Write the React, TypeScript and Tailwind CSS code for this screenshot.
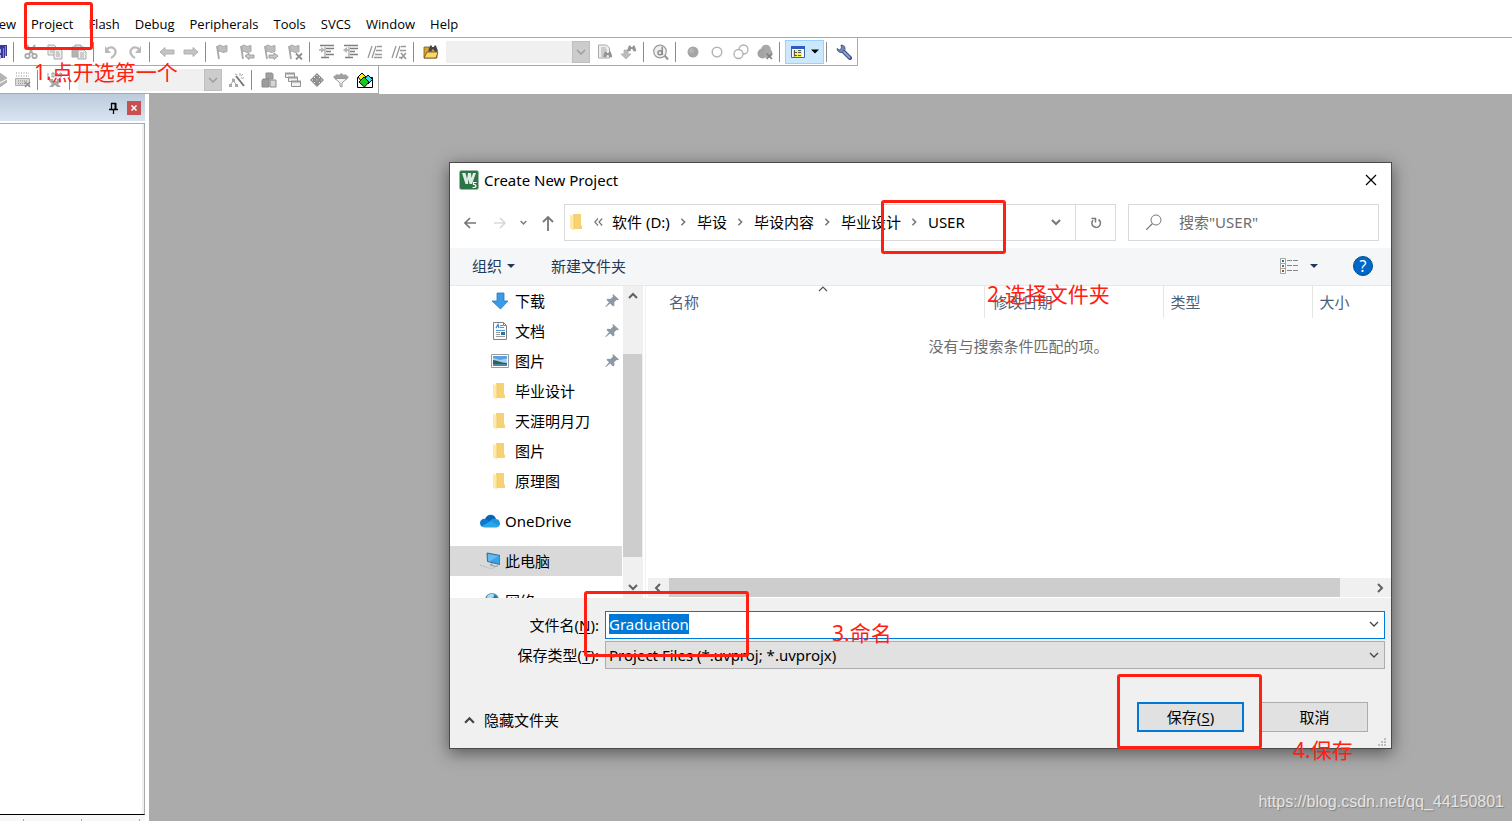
import { useEffect, useRef } from "react";
import type { ReactNode } from "react";

function Svg({ children, size = 16 }: { children: ReactNode; size?: number }) {
  return (
    <svg viewBox={`0 0 ${size} ${size}`} width={size} height={size} className="shrink-0" aria-hidden="true">
      {children}
    </svg>
  );
}

function Tool({ label, children }: { label: string; children: ReactNode }) {
  return (
    <button aria-label={label} className="flex h-6 w-6 shrink-0 items-center justify-center">
      <Svg>{children}</Svg>
    </button>
  );
}

function Cut({ label, children }: { label: string; children: ReactNode }) {
  return (
    <button aria-label={label} className="flex h-6 w-[11px] shrink-0 items-center justify-end overflow-hidden pr-1">
      <Svg>{children}</Svg>
    </button>
  );
}

function Sep() {
  return <span className="mr-[5px] ml-0.5 h-5 w-px shrink-0 bg-[#8c8c8c]" />;
}

function ToolCombo({ label }: { label: string }) {
  return (
    <div className="mx-[3px] flex h-[22px] w-36 shrink-0 bg-[#f0f0f0]">
      <input aria-label={label} disabled className="min-w-0 flex-1 bg-transparent" />
      <button aria-label={`${label} list`} className="flex w-[18px] items-center justify-center border border-[#bfbfbf] bg-[#cccccc]">
        <svg viewBox="0 0 10 6" width="10" height="6"><path d="M1 1l4 4 4-4" fill="none" stroke="#9a9a9a" strokeWidth="1.3" /></svg>
      </button>
    </div>
  );
}

const G = "#a9a9a9";

function Flag({ children }: { children?: ReactNode }) {
  return (
    <>
      <path d="M2 2.500l3-1.500 3 1.500 4-1v6l-4 1-3-1.500-2 1z" fill="#bdbdbd" stroke={G} />
      <path d="M2 2l2 13" stroke={G} strokeWidth="1.800" />
      {children}
    </>
  );
}

function Binoculars() {
  return <path d="M2 8l2-6h2l1 2h2l1-2h2l2 6v2h-4l-1-3h-2l-1 3H2z" />;
}

function Toolbars() {
  return (
    <div className="border-t border-[#a9a9a9]">
      <div role="toolbar" aria-label="File toolbar" className="flex h-7 w-[858px] items-center border-r border-b border-[#a9a9a9]">
        <Cut label="Save all">
          <path d="M4 1h12v11h-2v2H1V4h3z" fill="#3a3a9c" /><path d="M2 5h8v4H2zM3 11h7v4H3z" fill="#b4b5ec" /><path d="M12.500 4v10M14.500 2v10" stroke="#8686d0" />
        </Cut>
        <Sep />
        <Tool label="Cut">
          <path d="M4 1l6 9M12 1L6 10" stroke={G} strokeWidth="2" /><circle cx="4.500" cy="12" r="2.200" fill="none" stroke={G} strokeWidth="1.800" /><circle cx="11.500" cy="12" r="2.200" fill="none" stroke={G} strokeWidth="1.800" />
        </Tool>
        <Tool label="Copy">
          <path d="M1 1h6l2 2v8H1z" fill="#ececec" stroke={G} /><path d="M7 5h6l2 2v8H7z" fill="#ececec" stroke={G} /><path d="M3 4h3M3 6h4M3 8h3M9 8h3M9 10h4M9 12h4" stroke={G} />
        </Tool>
        <Tool label="Paste">
          <path d="M1 3h12v10H1z" fill="#b3b3b3" stroke={G} /><path d="M4 1h6v3H4z" fill="#dedede" stroke={G} /><path d="M7 6h6l2 2v7H7z" fill="#f0f0f0" stroke={G} /><path d="M9 9h4M9 11h4M9 13h4" stroke={G} />
        </Tool>
        <Sep />
        <Tool label="Undo"><path d="M4 5c6-4 10 1 8 5-1 2-2 3-4 4" fill="none" stroke="#b9b9b9" strokeWidth="2.200" /><path d="M2 2v7h6z" fill="#b9b9b9" /></Tool>
        <Tool label="Redo"><path d="M12 5C6 1 2 6 4 10c1 2 2 3 4 4" fill="none" stroke="#b9b9b9" strokeWidth="2.200" /><path d="M14 2v7H8z" fill="#b9b9b9" /></Tool>
        <Sep />
        <Tool label="Back"><path d="M1 8l5-4.500V6h9v4H6v2.500z" fill="#c4c4c4" stroke="#b0b0b0" /></Tool>
        <Tool label="Forward"><path d="M15 8l-5-4.500V6H1v4h9v2.500z" fill="#c4c4c4" stroke="#b0b0b0" /></Tool>
        <Sep />
        <Tool label="Toggle bookmark"><Flag /></Tool>
        <Tool label="Previous bookmark"><Flag><path d="M6 12l4-3v2h5v3h-5v1.500z" fill="#c8c8c8" stroke="#8f8f8f" strokeWidth=".8" /></Flag></Tool>
        <Tool label="Next bookmark"><Flag><path d="M15 12l-4-3v2H6v3h5v1.500z" fill="#c8c8c8" stroke="#8f8f8f" strokeWidth=".8" /></Flag></Tool>
        <Tool label="Clear bookmarks"><Flag><path d="M9 9.500l6 6M15 9.500l-6 6" stroke="#8f8f8f" strokeWidth="1.800" /></Flag></Tool>
        <Sep />
        <Tool label="Indent">
          <path d="M1 1.500h14M7 4.500h8M7 7.500h5M7 10.500h8M2 13.500h8" stroke="#808080" strokeWidth="1.300" /><path d="M0 6h5M6 3v10" stroke={G} strokeWidth="1.300" /><path d="M2 3l4 3-4 3z" fill="#b5b5b5" />
        </Tool>
        <Tool label="Unindent">
          <path d="M1 1.500h14M7 4.500h8M7 7.500h5M7 10.500h8M2 13.500h8" stroke="#808080" strokeWidth="1.300" /><path d="M1 6h5M6 3v10" stroke={G} strokeWidth="1.300" /><path d="M4 3L0 6l4 3z" fill="#b5b5b5" />
        </Tool>
        <Tool label="Comment"><path d="M1 14L5 2M5 14L9 2M10 2.500h5M9 6.500h6M8 10.500h7M7 13.500h8" stroke="#999" strokeWidth="1.300" /></Tool>
        <Tool label="Uncomment"><path d="M1 14L5 2M5 14L9 2M10 2.500h5M9 6.500h6M8 13.500h3" stroke="#999" strokeWidth="1.300" /><path d="M10 9l5 6M15 9l-5 6" stroke="#999" strokeWidth="1.600" /></Tool>
        <Sep />
        <Tool label="Find in files">
          <path d="M1 3h5l1 2h7v9H1z" fill="#d9a42c" stroke="#7b5a1a" strokeWidth=".8" /><path d="M1 14l3-6h11l-2 6z" fill="#f9d768" stroke="#6b4c10" strokeWidth=".8" /><g transform="translate(4 0) scale(.75)" fill="#45454f"><Binoculars /></g>
        </Tool>
        <ToolCombo label="Find text" />
        <Tool label="Find">
          <path d="M1.500 1h8l3 3v10h-11z" fill="#eee" stroke={G} /><path d="M4 4h5M4 6h6M4 8h5M4 10h4M4 12h3" stroke={G} /><g transform="translate(5 6) scale(.72)" fill="#939393"><Binoculars /></g>
        </Tool>
        <Tool label="Incremental find">
          <path d="M3 6h4v4h3l-5 5-5-5h3z" fill="#bcbcbc" stroke={G} strokeWidth=".7" /><g transform="translate(5 0) scale(.72)" fill="#959595"><Binoculars /></g>
        </Tool>
        <Sep />
        <Tool label="Debug session">
          <circle cx="7" cy="7.500" r="6.300" fill="#efefef" stroke="#999" strokeWidth="1.200" /><path d="M11.500 11.500l3.500 4" stroke="#999" strokeWidth="2.200" /><path d="M9.200 3v8" stroke="#8c8c8c" strokeWidth="1.500" /><circle cx="7" cy="8.800" r="2" fill="none" stroke="#8c8c8c" strokeWidth="1.400" />
        </Tool>
        <Sep />
        <Tool label="Insert breakpoint"><circle cx="8" cy="8" r="5.500" fill="#a5a5a5" /><circle cx="6.500" cy="6.500" r="2.500" fill="#b4b4b4" /></Tool>
        <Tool label="Disable breakpoint"><circle cx="8" cy="8" r="4.800" fill="#fff" stroke="#b5b5b5" strokeWidth="1.500" /></Tool>
        <Tool label="Disable all breakpoints"><circle cx="10.500" cy="5.500" r="4.500" fill="#fff" stroke="#b0b0b0" strokeWidth="1.300" /><circle cx="5.500" cy="10" r="4.500" fill="#fff" stroke="#b0b0b0" strokeWidth="1.300" /></Tool>
        <Tool label="Kill all breakpoints"><circle cx="9" cy="5.500" r="4.800" fill="#a9a9a9" /><circle cx="5.500" cy="9.500" r="5" fill="#a3a3a3" /><circle cx="11" cy="9.500" r="4.500" fill="#a9a9a9" /><path d="M9.500 9.500l5.500 5.500M15 9.500L9.500 15" stroke="#828282" strokeWidth="1.700" /></Tool>
        <Sep />
        <button aria-label="Project window" className="flex h-6 w-[39px] shrink-0 items-center justify-between border border-[#99d1ff] bg-[#cce8ff] pr-1 pl-1">
          <Svg>
            <path d="M1.500 2.500h13v11h-13z" fill="#fff" stroke="#3b63a8" /><path d="M1 2h14v3H1z" fill="#2b5cc4" /><path d="M3 6h9v7H3z" fill="#f4f453" /><path d="M4.500 6v6.500M5 8.500h2M5 11.500h2M8 6.500h3M8 8.500h3M8 11.500h3" stroke="#555" />
          </Svg>
          <svg viewBox="0 0 8 5" width="8" height="5"><path d="M0 .5h8L4 4.500z" fill="#000" /></svg>
        </button>
        <Sep />
        <Tool label="Configuration">
          <path d="M7 7l7 7" stroke="#3c5080" strokeWidth="4" strokeLinecap="round" /><path d="M7 7l6.500 6.500" stroke="#8ba2cc" strokeWidth="1.800" strokeLinecap="round" /><path d="M5 1c3 0 4.500 2 4 4.500L6 8.500C3 9 1 7 1 4.500l2.500 1.500 2-2z" fill="#6f86b2" stroke="#3c5080" strokeWidth=".8" />
        </Tool>
      </div>
      <div role="toolbar" aria-label="Build toolbar" className="flex h-7 w-[379px] items-center border-r border-b border-[#a9a9a9]">
        <Cut label="Build"><path d="M2 4l7-3 7 5-7 4zM2 8l7 4 7-4v2l-7 5-7-4z" fill="#b4b4b4" stroke={G} strokeWidth=".7" /></Cut>
        <Tool label="Batch build">
          <path d="M1 1h13M1 4h13" stroke="#b5b5b5" strokeDasharray="1 1.500" strokeWidth="1.400" /><path d="M.5 6.500h14v7H.500z" fill="#dadada" stroke="#b0b0b0" /><path d="M3 9h9M3 11.500h7" stroke="#8f8f8f" strokeDasharray="1 1" /><path d="M10 10l5 5M15 10l-5 5" stroke="#8d8d8d" strokeWidth="1.500" />
        </Tool>
        <Sep />
        <Tool label="Download">
          <path d="M1 1v4h2M5 1h2v4H5zM9 5V2l1-1 1 1v3M13 1h1l1 1v2l-1 1h-1z" fill="none" stroke="#999" /><path d="M2 7h4v2h4V7h4v2l-3 3 3 3h-4l-2-2-2 2H2l3-3-3-3z" fill="#a8a8a8" />
        </Tool>
        <Sep />
        <ToolCombo label="Target" />
        <Tool label="Target options">
          <path d="M7 4l8 10" stroke="#777" strokeWidth="2" /><path d="M11 1v3M14 2l-2 2M12 6h3M6 2l2 1" stroke={G} /><path d="M4 6v3M2 12l2-3 3 3" stroke={G} fill="none" /><path d="M0 12h3v3H0zM6 12h3v3H6zM3 7h3v3H3z" fill={G} />
        </Tool>
        <Sep />
        <Tool label="File extensions"><path d="M5 1h6l1 1.500V7H5z" fill="#9f9f9f" stroke="#8d8d8d" /><path d="M1 8.500L2 7h6v8H1z" fill="#9c9c9c" stroke="#8a8a8a" /><path d="M9 8h6v7H9z" fill="#d5d5d5" stroke="#8a8a8a" /></Tool>
        <Tool label="Multi-project"><g fill="#f2f2f2" stroke="#8f8f8f"><path d="M.5 1.500h9v4h-9z" /><path d="M3.500 5.500h9v4h-9z" /><path d="M6.500 9.500h9v5h-9z" /></g><path d="M0 1.500h10M3 5.500h10M6 9.500h10" stroke="#999" strokeWidth="1.800" /></Tool>
        <Tool label="Run-time environment"><path d="M8 1l7 7-7 7-7-7z" fill="#8e8e8e" /><path d="M5 5h1v1H5zM10 5h1v1h-1zM7.500 3h1v1h-1zM7.500 7.500h1v1h-1zM5 10h1v1H5zM10 10h1v1h-1zM3 7.500h1v1H3zM12 7.500h1v1h-1z" fill="#f3f3f3" /></Tool>
        <Tool label="Select packs"><path d="M0 5l4-3 2 1 2-2 3 2 1-1 4 3-3 3H3z" fill="#a0a0a0" /><path d="M2 6.500h12l-5 4.500v4l-2-1v-3z" fill="#f2f2f2" stroke="#999" /></Tool>
        <Tool label="Pack installer">
          <path d="M.5 5.500h15v10H.500z" fill="#fff" stroke="#000" /><path d="M5 1l4 4-4 5-4-5z" fill="#f5ef19" stroke="#000" /><path d="M11 3l4.500 4.500L11 12 7 7.500z" fill="#35dcf0" stroke="#000" /><path d="M7 5l5 5-4.500 5L2 10z" fill="#10d010" stroke="#000" />
        </Tool>
      </div>
    </div>
  );
}

function Folder() {
  return (
    <Svg size={18}>
      <path d="M5 1h8v11.500h1V16H5z" fill="#f6d273" /><path d="M2 1.500l4 2v14l-4-2z" fill="#fde9a9" /><path d="M6 3.500V16" stroke="#eec35a" fill="none" strokeWidth=".6" />
    </Svg>
  );
}

function Chevron({ dir, className, size = 10, stroke = 2 }: { dir: "up" | "down" | "left" | "right"; className: string; size?: number; stroke?: number }) {
  const d = { up: "M1 7l4-4 4 4", down: "M1 3l4 4 4-4", left: "M7 1L3 5l4 4", right: "M3 1l4 4-4 4" }[dir];
  return (
    <svg viewBox="0 0 10 10" width={size} height={size} className={className} aria-hidden="true">
      <path d={d} fill="none" stroke="currentColor" strokeWidth={stroke} />
    </svg>
  );
}

const downloadIcon = <Svg size={18}><path d="M6 1h7v8h4l-7.500 8L1 9h5z" fill="#3c9be8" stroke="#2478bd" strokeWidth=".8" /></Svg>;
const documentIcon = (
  <Svg size={18}>
    <path d="M2.500.500h10l3 3v14h-13z" fill="#fbfbfb" stroke="#7d8286" /><path d="M12.500.500v3h3" fill="none" stroke="#7d8286" /><path d="M5 6l2-3.500L8 6" fill="none" stroke="#2e86cc" strokeWidth="1.200" /><path d="M9 3.500h3M9 5.500h4M5 8.500h9" stroke="#4d9ad6" /><path d="M5 10.500h4M5 12.500h4M5 14.500h9" stroke="#9a9fa3" /><path d="M10 10h4v3h-4z" fill="#2f7399" />
  </Svg>
);
const pictureIcon = (
  <Svg size={18}>
    <path d="M.5 2.500h17v13H.500z" fill="#fff" stroke="#9a9a9a" /><path d="M2 4h14v10H2z" fill="#a9d3f3" /><path d="M2 4h14v2.500L9 8 2 6z" fill="#5b9fe4" /><path d="M2 8c4 0 8 3 14 3v1H2z" fill="#35614e" /><path d="M2 12h14v2H2z" fill="#4a84ac" />
  </Svg>
);
const oneDriveIcon = (
  <svg viewBox="0 0 20 14" width="20" height="14" className="shrink-0">
    <path d="M5 5c2-5 9-6 11 0l-7 4z" fill="#0864b8" /><path d="M0 9c0-3 3-5 6-4l8 5-10 3C2 13 0 12 0 9z" fill="#1178d0" /><path d="M9 8c2-3 5-4 7-3 3 0 4 3 4 5 0 2-2 3-4 3z" fill="#1f94e2" /><path d="M2 12l9-5 8 5c-1 1-2 1.500-3 1.500H5c-1 0-2-.5-3-1.500z" fill="#28a8ea" />
  </svg>
);
const computerIcon = (
  <svg viewBox="0 0 20 18" width="20" height="18" className="shrink-0">
    <path d="M7 1l13 2.500v9L7.500 9.500z" fill="#37a5ee" stroke="#4c6475" /><path d="M8 2l10.500 2-9 5.500L8 9z" fill="#5fbcf7" /><path d="M13 11.500l-3 1.500 6 1.500 2-1" fill="none" stroke="#8f9ba3" /><path d="M0 13l11 3.500 4-1" fill="none" stroke="#b1bac0" strokeDasharray="2 1" /><path d="M1 14l9 3" stroke="#c9d0d4" />
  </svg>
);
const networkIcon = (
  <svg viewBox="0 0 20 18" width="20" height="18" className="shrink-0">
    <circle cx="12" cy="8" r="7" fill="#4397c6" /><path d="M7 5c2-4 6-4 7-2s-2 1-2 4-4 2-5-2z" fill="#a9dbe9" /><path d="M14 3c3 1 4 4 4 6l-3-1z" fill="#2b6a92" /><path d="M1 6l5 1v6l-5-1z" fill="#7a99aa" />
  </svg>
);

function Pin() {
  return (
    <Svg size={14}>
      <path d="M8 0l6 5.500-1.500.8-1-.3-2.300 2.300.3 3-1.500 1.200-2.800-3L1 13l-.8-.3L4 8.200 1.500 6l1-1.200 3 .2L8 2.500 7.500 1z" fill="#8b99a6" />
    </Svg>
  );
}

function TreeItem({ icon, text, pinned, root, selected }: { icon: ReactNode; text: string; pinned?: boolean; root?: boolean; selected?: boolean }) {
  return (
    <li className={root ? "mt-2.5" : ""}>
      <button className={`flex h-[30px] w-full items-center pr-[3px] text-left ${root ? "gap-[5px] pl-[30px]" : "gap-[6px] pl-[41px]"} ${selected ? "bg-[#d9d9d9]" : ""}`}>
        {icon}
        <span className="flex-1">{text}</span>
        {pinned && <Pin />}
      </button>
    </li>
  );
}

function Dialog() {
  const nameRef = useRef<HTMLInputElement>(null);
  useEffect(() => {
    nameRef.current?.focus({ preventScroll: true });
    nameRef.current?.select();
  }, []);
  const crumbs = ["软件 (D:)", "毕设", "毕设内容", "毕业设计", "USER"];
  return (
    <section role="dialog" aria-label="Create New Project" className="absolute top-[68px] left-[300px] w-[943px] border border-[#4a4a4a] bg-white font-['Noto_Sans','Noto_Sans_CJK_SC',sans-serif] text-[15px] leading-5 text-black shadow-[0_4px_16px_rgba(0,0,0,0.5)]">
      <header className="flex h-[35px] items-center pr-[14px] pb-0.5 pl-[9px]">
        <Svg size={20}>
          <rect x=".5" y=".5" width="19" height="19" rx="2" fill="#2b7445" stroke="#9db8a6" /><path d="M3 3h3.500l1.500 6 1-6h3l.5 5L14 3h3l-4 11h-2.500L9.500 9 9 14H6.500z" fill="#e0ebe4" /><path d="M17.500 12.500h-3v2c3-.5 3.500 3 .2 3h-1.200" fill="none" stroke="#fff" strokeWidth="1.200" />
        </Svg>
        <h1 className="ml-[5px] flex-1">Create New Project</h1>
        <button aria-label="Close"><svg viewBox="0 0 12 12" width="12" height="12"><path d="M1 1l10 10M11 1L1 11" stroke="#000" strokeWidth="1.200" /></svg></button>
      </header>
      <nav aria-label="Address" className="flex items-center pt-1.5 pr-3 pb-[7px] pl-2">
        <button aria-label="Back" className="flex w-6 justify-center"><svg viewBox="0 0 12 12" width="12" height="12"><path d="M12 6H1M6 1L1 6l5 5" fill="none" stroke="#777" strokeWidth="1.700" /></svg></button>
        <button aria-label="Forward" className="ml-1.5 flex w-6 justify-center"><svg viewBox="0 0 12 12" width="12" height="12"><path d="M0 6h11M6 1l5 5-5 5" fill="none" stroke="#d9d9d9" strokeWidth="1.700" /></svg></button>
        <button aria-label="Recent" className="ml-[3px] flex w-4 justify-center"><Chevron dir="down" size={7} className="text-[#777]" /></button>
        <button aria-label="Up" className="ml-[5px] flex w-6 justify-center"><svg viewBox="0 0 12 16" width="12" height="16"><path d="M6 16V2M1 7l5-5 5 5" fill="none" stroke="#777" strokeWidth="1.800" /></svg></button>
        <div className="ml-1 flex h-[37px] flex-1 border border-[#d9d9d9]">
          <div className="flex flex-1 items-center pb-0.5 pl-[3px]">
            <Folder />
            <svg viewBox="0 0 9 8" width="9" height="8" className="ml-2" aria-hidden="true"><path d="M4 .5L.8 4 4 7.500M8.200.500L5 4l3.200 3.500" fill="none" stroke="#777" strokeWidth="1.200" /></svg>
            <ol className="ml-[9px] flex items-center">
              {crumbs.map((c, i) => (
                <li key={c} className="flex items-center">
                  {i > 0 && <span className="flex w-[27px] justify-center"><Chevron dir="right" size={8} className="text-[#777]" /></span>}
                  <a href="#">{c}</a>
                </li>
              ))}
            </ol>
            <button aria-label="Previous locations" className="mr-[14px] ml-auto"><Chevron dir="down" className="text-[#777]" /></button>
          </div>
          <button aria-label="Refresh" className="flex w-10 items-center justify-center border-l border-[#d9d9d9]">
            <svg viewBox="0 0 12 12" width="12" height="12"><path d="M8.500 2.500A4.300 4.300 0 1 1 3 3.200" fill="none" stroke="#777" strokeWidth="1.500" /><path d="M1.500 1.500h4v4" fill="none" stroke="#777" strokeWidth="1.500" /></svg>
          </button>
        </div>
        <div className="ml-3 flex h-[37px] w-[251px] items-center border border-[#d9d9d9] pb-0.5 pl-[17px]">
          <Svg><circle cx="10" cy="6" r="5" fill="none" stroke="#777" /><path d="M6.500 9.500L0 16" stroke="#777" strokeWidth="1.200" /></Svg>
          <input aria-label="搜索" placeholder={'搜索"USER"'} className="ml-[17px] min-w-0 flex-1 outline-none placeholder:text-[#6d6d6d]" />
        </div>
      </nav>
      <div role="toolbar" aria-label="Folder" className="flex h-[38px] items-center border-b border-[#e5e9ec] bg-[#f5f6f7] pr-[18px] pb-0.5 pl-[22px] text-[#1e395b]">
        <button className="flex items-center gap-[5px]">组织<svg viewBox="0 0 8 4" width="8" height="4"><path d="M0 0h8L4 4z" fill="currentColor" /></svg></button>
        <button className="ml-9">新建文件夹</button>
        <button aria-label="View" className="ml-auto flex items-center gap-[11px]">
          <svg viewBox="0 0 19 16" width="19" height="16">
            <path d="M.5.500h5v5h-5zM.5 5.500h5v5h-5zM.5 10.500h5v5h-5z" fill="#fff" stroke="#a5a5a5" /><path d="M2 2h2v2H2z" fill="#2d6f9e" /><path d="M2 7h2v2H2z" fill="#3a8a4d" /><path d="M2 12h2v2H2z" fill="#c23f2b" /><path d="M7 2.500h5M13 2.500h5M7 7.500h5M13 7.500h5M7 12.500h5M13 12.500h5" stroke="#868686" />
          </svg>
          <svg viewBox="0 0 8 4" width="8" height="4"><path d="M0 0h8L4 4z" fill="currentColor" /></svg>
        </button>
        <button aria-label="Help" className="ml-[35px] flex h-5 w-5 items-center justify-center rounded-full border border-[#00508f] bg-[#0067c8] text-base text-white">?</button>
      </div>
      <div className="flex h-[312px]">
        <ul className="w-[172px] shrink-0 overflow-hidden">
          <TreeItem icon={downloadIcon} text="下载" pinned />
          <TreeItem icon={documentIcon} text="文档" pinned />
          <TreeItem icon={pictureIcon} text="图片" pinned />
          <TreeItem icon={<Folder />} text="毕业设计" />
          <TreeItem icon={<Folder />} text="天涯明月刀" />
          <TreeItem icon={<Folder />} text="图片" />
          <TreeItem icon={<Folder />} text="原理图" />
          <TreeItem root icon={oneDriveIcon} text="OneDrive" />
          <TreeItem root selected icon={computerIcon} text="此电脑" />
          <TreeItem root icon={networkIcon} text="网络" />
        </ul>
        <div className="ml-px flex w-5 shrink-0 flex-col items-center bg-[#f0f0f0] pr-px text-[#606060]">
          <Chevron dir="up" className="mt-[5px]" />
          <div className="mt-[53px] h-[203px] w-full bg-[#cdcdcd]" />
          <Chevron dir="down" className="mt-auto mb-1.5" />
        </div>
        <div className="ml-0.5 flex min-w-0 flex-1 flex-col border-l border-[#f0f0f0]">
          <table className="w-full table-fixed">
            <thead>
              <tr className="h-8 text-left text-[#4c607a]">
                <th className="relative w-[338px] border-r border-[#e5e5e5] pl-[23px] font-normal">
                  名称
                  <Chevron dir="up" stroke={1.2} className="absolute top-[-2px] left-[172px] text-[#555]" />
                </th>
                <th className="w-[179px] border-r border-[#e5e5e5] pl-2 font-normal">修改日期</th>
                <th className="w-[149px] border-r border-[#e5e5e5] pl-[7px] font-normal">类型</th>
                <th className="pl-[7px] font-normal">大小</th>
              </tr>
            </thead>
            <tbody>
              <tr><td colSpan={4} className="pt-[18px] text-center text-[#6d6d6d]">没有与搜索条件匹配的项。</td></tr>
            </tbody>
          </table>
          <div className="mt-auto mb-px ml-0.5 flex h-[19px] items-center bg-[#f0f0f0] text-[#606060]">
            <Chevron dir="left" className="ml-[5px]" />
            <div className="ml-1.5 h-full w-[671px] bg-[#cdcdcd]" />
            <Chevron dir="right" className="mr-1.5 ml-auto" />
          </div>
        </div>
      </div>
      <footer className="relative bg-[#f0f0f0] pt-[13px] pr-1.5 pb-4">
        <div className="flex items-center">
          <label htmlFor="file-name" className="w-[149px] shrink-0 text-right">文件名(<u className="underline-offset-2">N</u>):</label>
          <div className="ml-1.5 flex h-7 flex-1 items-center border border-[#0078d7] bg-white pb-0.5">
            <input id="file-name" ref={nameRef} defaultValue="Graduation" className="h-5 min-w-0 flex-1 pl-[3px] leading-5 outline-none selection:bg-[#0078d7] selection:text-white" />
            <Chevron dir="down" stroke={1.3} className="mr-[5px] text-[#444]" />
          </div>
        </div>
        <div className="mt-0.5 flex items-center">
          <label htmlFor="file-type" className="w-[149px] shrink-0 text-right">保存类型(<u className="underline-offset-2">T</u>):</label>
          <div className="ml-1.5 flex h-7 flex-1 items-center border border-[#adadad] bg-[#e1e1e1]">
            <select id="file-type" className="h-full min-w-0 flex-1 appearance-none pl-[3px] outline-none">
              <option>Project Files (*.uvproj; *.uvprojx)</option>
            </select>
            <Chevron dir="down" stroke={1.3} className="mr-[5px] text-[#444]" />
          </div>
        </div>
        <div className="mt-[33px] flex items-center pr-[17px] pl-[14px]">
          <button className="mt-1.5 flex items-center gap-[9px]"><Chevron dir="up" size={11} className="text-[#444]" />隐藏文件夹</button>
          <button className="ml-auto h-[30px] w-[107px] border-2 border-[#0078d7] bg-[#e1e1e1]">保存(<u className="underline-offset-2">S</u>)</button>
          <button className="ml-[17px] h-[30px] w-[107px] border border-[#adadad] bg-[#e1e1e1]">取消</button>
        </div>
        <svg viewBox="0 0 8 8" width="8" height="8" className="absolute right-[5px] bottom-0.5"><path d="M6 0h2v2H6zM3 3h2v2H3zM6 3h2v2H6zM0 6h2v2H0zM3 6h2v2H3zM6 6h2v2H6z" fill="#bdbdbd" /></svg>
      </footer>
    </section>
  );
}

function Mark({ className }: { className: string }) {
  return <span aria-hidden="true" className={`pointer-events-none absolute rounded-[3px] border-3 border-[#ff2012] ${className}`} />;
}

function Note({ className, children }: { className: string; children: ReactNode }) {
  return <p className={`pointer-events-none absolute font-['Noto_Sans','Noto_Sans_CJK_SC',sans-serif] text-[21px] leading-6 whitespace-nowrap text-[#ff2012] ${className}`}>{children}</p>;
}

export default function App() {
  const menus = ["Project", "Flash", "Debug", "Peripherals", "Tools", "SVCS", "Window", "Help"];
  return (
    <div className="relative flex h-screen flex-col overflow-hidden bg-white font-['Open_Sans','Noto_Sans_CJK_SC',sans-serif]">
      <nav aria-label="Menu" className="flex h-[37px] shrink-0 items-center gap-[15px] pt-2.5 text-[13px] leading-5 text-black">
        <button className="flex w-4 justify-end overflow-hidden">View</button>
        {menus.map((m) => <button key={m}>{m}</button>)}
      </nav>
      <Toolbars />
      <div className="flex min-h-0 flex-1">
        <aside className="flex w-[145px] shrink-0 flex-col">
          <div className="flex h-[27px] items-center justify-end gap-[9px] bg-linear-to-b from-[#bccbdc] to-[#d9e4f1] pr-1">
            <button aria-label="Auto hide"><svg viewBox="0 0 9 12" width="9" height="12"><path d="M2.500 1v6M2 1.500h5M0 7.500h9M4.500 8v4" fill="none" stroke="#000" strokeWidth="1.300" /><path d="M5.500 1h2v6h-2z" fill="#000" /></svg></button>
            <button aria-label="Close panel" className="flex h-[14px] w-[14px] items-center justify-center bg-[#c75050]">
              <svg viewBox="0 0 6 6" width="6" height="6"><path d="M.5.500l5 5M5.500.500l-5 5" stroke="#fff" strokeWidth="1.500" /></svg>
            </button>
          </div>
          <div className="mt-0.5 flex flex-1 border-t border-r border-b border-t-[#a9a9a9] border-r-[#a9a9a9] border-b-black">
            <div className="flex-1 border-r-2 border-[#f0f0f0]" />
          </div>
          <div className="flex h-1.5 bg-[#f7f7f7] pt-1">
            <span className="w-6 border-r border-[#a9a9a9]" /><span className="w-[58px] border-r border-[#a9a9a9]" /><span className="w-[58px] border-r border-[#a9a9a9]" />
          </div>
        </aside>
        <main className="relative ml-1 min-w-0 flex-1 bg-[#ababab]">
          <Dialog />
          <p className="absolute right-2 bottom-[7px] font-['Liberation_Sans',sans-serif] text-base leading-6 text-[#e4e4e4] [text-shadow:1px_1px_1px_rgba(0,0,0,0.25)]">https://blog.csdn.net/qq_44150801</p>
        </main>
      </div>
      <Mark className="top-[2px] left-[24px] h-12 w-[69px]" />
      <Mark className="top-[200px] left-[881px] h-[54px] w-[125px]" />
      <Mark className="top-[591px] left-[584px] h-[66px] w-[165px]" />
      <Mark className="top-[674px] left-[1117px] h-[75px] w-[145px]" />
      <Note className="top-[60px] left-[34px]">1.点开选第一个</Note>
      <Note className="top-[282px] left-[987px]">2.选择文件夹</Note>
      <Note className="top-[621px] left-[832px]">3.命名</Note>
      <Note className="top-[738px] left-[1293px]">4.保存</Note>
    </div>
  );
}
